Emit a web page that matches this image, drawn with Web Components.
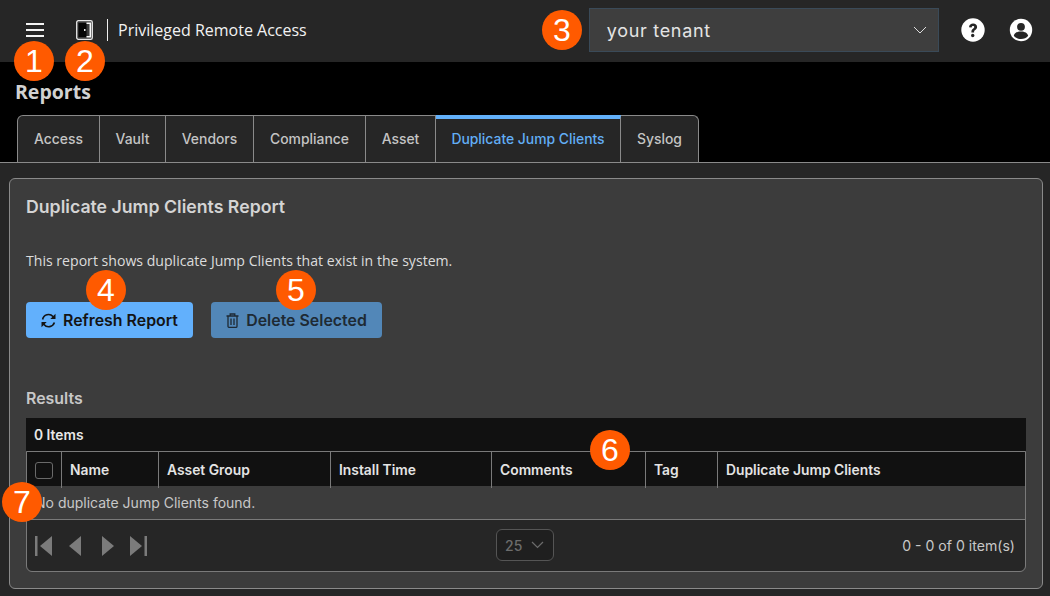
<!DOCTYPE html>
<html lang="en"><head><meta charset="utf-8"><title>Reports</title>
<style>
html,body{margin:0;padding:0;background:#262626;height:596px;overflow:hidden}
body{position:relative;font-family:Inter,"Liberation Sans",sans-serif;color:#ddd}
report-page{display:block}
</style></head><body>
<report-page></report-page>
<script>
function def(name,html){
  customElements.define(name,class extends HTMLElement{
    constructor(){super();this.attachShadow({mode:'open'}).innerHTML=html;}
  });
}
def('note-badge',`<style>
:host{position:absolute;width:40px;height:40px;border-radius:50%;background:#ff5a00;color:#fff;display:flex;align-items:center;justify-content:center;font:32px/40px "Liberation Sans",Arial,sans-serif;z-index:5}
</style><slot></slot>`);

def('app-header',`<style>
:host{display:flex;align-items:center;height:62px;padding-bottom:2px;background:#262626;box-sizing:border-box;color:#fff}
.menu{margin-left:26px;width:18px;height:15px;display:flex;flex-direction:column;justify-content:space-between}
.menu i{display:block;height:2.4px;background:#f4f4f4}
.door{margin-left:32px;display:block}
.sep{width:1px;height:22px;background:#eee;margin:0 10px 0 14px}
.name{font:16px "Open Sans",sans-serif;color:#f2f2f2;white-space:nowrap}
.tenant{margin-left:282px;width:350px;height:44px;box-sizing:border-box;background:#3e3e3e;border:1px solid #3a4a58;display:flex;align-items:center;justify-content:space-between;padding:0 11px 0 17px;font:18px Inter,sans-serif;letter-spacing:.7px;color:#e4e4e4}
.ico{display:block}
.help{margin-left:22px}.user{margin-left:24px}
</style>
<div class="menu"><i></i><i></i><i></i></div>
<svg class="door" width="17" height="20" viewBox="0 0 17 20"><rect x=".7" y=".7" width="15.6" height="18.6" rx="1.6" fill="#3a3a3a" stroke="#e6e6e6" stroke-width="1.300"/><path d="M2.500 3h8v14h-8z" fill="#050505"/><path d="M10.500 3.200h3.800v13.600h-3.800" fill="none" stroke="#f6f6f6" stroke-width="1.500"/><rect x="8" y="9" width="1.500" height="2" fill="#eee"/></svg>
<div class="sep"></div><div class="name">Privileged Remote Access</div>
<div class="tenant"><span>your tenant</span><svg width="14" height="8" viewBox="0 0 14 8"><path d="M1 1l6 6 6-6" fill="none" stroke="#ddd" stroke-width="1"/></svg></div>
<svg class="ico help" width="24" height="24" viewBox="0 0 24 24"><circle cx="12" cy="12" r="11.700" fill="#fff"/><path d="M8 9.200c.2-2.200 1.900-3.600 4.100-3.600 2.400 0 4 1.400 4 3.400 0 1.500-.9 2.400-1.900 3.100-.8.6-1.100 1-1.100 1.900v.4h-2.700v-.7c0-1.500.6-2.300 1.600-3 .9-.6 1.300-1.100 1.300-1.600 0-.7-.5-1.200-1.300-1.200-.9 0-1.300.6-1.400 1.500z" fill="#262626"/><circle cx="11.700" cy="17.500" r="1.700" fill="#262626"/></svg>
<svg class="ico user" width="24" height="24" viewBox="0 0 24 24"><circle cx="12" cy="12" r="11.200" fill="#fff"/><circle cx="12" cy="8.800" r="3.900" fill="#262626"/><path d="M4.800 17.800c.6-2.900 3.400-4.400 7.200-4.400s6.600 1.500 7.200 4.400c-1.700 2.100-4.200 3.200-7.200 3.200s-5.500-1.100-7.200-3.200z" fill="#262626"/></svg>`);

def('page-title',`<style>:host{display:block;height:53px;box-sizing:border-box;padding:16px 0 0 15px;background:#000;color:#d2d2d2;font:700 19.500px/28px "Open Sans",sans-serif}</style><slot></slot>`);

def('tab-bar',`<style>
:host{display:flex;height:48px;box-sizing:border-box;background:#000;padding-left:17px;border-bottom:1px solid #8a8a8a}
::slotted(tab-item:first-child){border-top-left-radius:6px;border-left:1px solid #8a8a8a}
::slotted(tab-item:last-child){border-top-right-radius:6px}
</style><slot></slot>`);
def('tab-item',`<style>
:host{display:flex;align-items:center;justify-content:center;box-sizing:border-box;height:47px;padding-bottom:1px;background:#262626;color:#c4c4c4;font:500 13.900px Inter,sans-serif;border-top:1px solid #8a8a8a;border-right:1px solid #8a8a8a;white-space:nowrap}
:host([active]){color:#62aef5;border-top:4px solid #62b0fa;background:#262626;padding-bottom:4px}
</style><slot></slot>`);

def('report-card',`<style>
:host{display:block;margin:15px 7px 0 9px;height:411px;box-sizing:border-box;background:#3c3c3c;border:1px solid #8a8a8a;border-radius:6px;padding:0 16px}
h2{margin:0;padding-top:18px;height:39px;font:600 17.700px/20px Inter,sans-serif;color:#d4d4d4}
p{margin:0;padding-top:16px;font:14.100px/18px "Open Sans",sans-serif;color:#dcdcdc;height:18px}
.btns{display:flex;gap:18px;margin-top:32px}
h3{margin:0;padding-top:52px;font:600 15.900px/18px Inter,sans-serif;color:#c8c8c8;height:18px}
</style>
<h2>Duplicate Jump Clients Report</h2>
<p>This report shows duplicate Jump Clients that exist in the system.</p>
<div class="btns"><slot name="btn"></slot></div>
<h3>Results</h3>
<slot></slot>`);

def('action-button',`<style>
:host{display:flex;align-items:center;justify-content:center;gap:7px;height:36px;box-sizing:border-box;background:#62b0fc;color:#141414;border-radius:4px;font:600 15.900px Inter,sans-serif;white-space:nowrap}
:host([disabled]){background:#5287b8;color:#1e2a34}
</style><slot name="icon"></slot><slot></slot>`);

def('data-grid',`<style>
:host{display:block;margin-top:10px;color:#eee}
.bar{height:33px;background:#111;font:600 13.800px/34px Inter,sans-serif;padding-left:8px;color:#e8e8e8}
.box{border:1px solid #7a7a7a;border-radius:0 0 6px 6px}
.head{display:grid;grid-template-columns:34px 97px 172px 161px 154px 72px 1fr;height:34px;background:#111;font:600 13.850px/36px Inter,sans-serif;color:#e4e4e4}
.head>div{border-left:1px solid #7a7a7a;padding-left:8px;white-space:nowrap}
.head>div:first-child{border:0;padding:0;display:flex;align-items:center;justify-content:center}
.cb{width:18px;height:17px;box-sizing:border-box;border:1.500px solid #6a6a6a;border-radius:3px}
.empty{height:34px;box-sizing:border-box;border-bottom:1px solid #7a7a7a;padding-left:8px;font:14px/34px Inter,sans-serif;color:#c8c8c8;background:#3c3c3c}
.pager{display:flex;align-items:center;height:51px;background:#262626;border-radius:0 0 6px 6px;position:relative;padding:0 10px 0 8px}
.nav{display:flex;align-items:center}
.size{position:absolute;left:469px;top:9px;width:58px;height:32px;box-sizing:border-box;border:1px solid #555;border-radius:6px;background:#1f1f1f;display:flex;align-items:center;justify-content:space-between;padding:0 9px 0 8px;font:500 14px Inter,sans-serif;color:#6c6c6c}
.count{margin-left:auto;font:14.100px Inter,sans-serif;color:#c8c8c8}
</style>
<div class="bar">0 Items</div>
<div class="box">
<div class="head"><div><span class="cb"></span></div><div>Name</div><div>Asset Group</div><div>Install Time</div><div>Comments</div><div>Tag</div><div>Duplicate Jump Clients</div></div>
<div class="empty">No duplicate Jump Clients found.</div>
<div class="pager"><div class="nav">
<svg width="17" height="20" viewBox="0 0 17 20" fill="#7b7b7b"><rect width="2.500" height="20"/><path d="M17 0v20L5 10z"/></svg>
<svg style="margin-left:17px" width="12" height="20" viewBox="0 0 12 20" fill="#7b7b7b"><path d="M12 0v20L0 10z"/></svg>
<svg style="margin-left:21px" width="12" height="20" viewBox="0 0 12 20" fill="#7b7b7b"><path d="M0 0v20l12-10z"/></svg>
<svg style="margin-left:16px" width="17" height="20" viewBox="0 0 17 20" fill="#7b7b7b"><rect x="14.500" width="2.500" height="20"/><path d="M0 0v20l12-10z"/></svg>
</div>
<div class="size"><span>25</span><svg width="13" height="8" viewBox="0 0 13 8"><path d="M1 1l5.500 5.500L12 1" fill="none" stroke="#6c6c6c" stroke-width="1.200"/></svg></div>
<div class="count">0 - 0 of 0 item(s)</div></div>
</div>`);

def('report-page',`<style>:host{display:block;height:596px}svg{display:block}</style>
<app-header></app-header>
<page-title>Reports</page-title>
<tab-bar>
<tab-item style="width:83px">Access</tab-item><tab-item style="width:66px">Vault</tab-item><tab-item style="width:88px">Vendors</tab-item><tab-item style="width:112px">Compliance</tab-item><tab-item style="width:70px">Asset</tab-item><tab-item active style="width:185px">Duplicate Jump Clients</tab-item><tab-item style="width:78px">Syslog</tab-item>
</tab-bar>
<report-card>
<action-button slot="btn" style="width:167px"><svg slot="icon" width="15" height="15" viewBox="0 0 15 15" fill="none" stroke="#141414" stroke-width="1.600"><path d="M1.600 6.500a6 6 0 0 1 10.400-3l1.500 1.500"/><path d="M13.400 9.500a6 6 0 0 1-10.400 2l-1.500-1.500"/><path d="M14.500 .8v5.200H9.300zM.5 14.200V9h5.200z" fill="#141414" stroke="none"/></svg>Refresh Report</action-button>
<action-button slot="btn" disabled style="width:171px"><svg slot="icon" width="13" height="15" viewBox="0 0 13 15" fill="none" stroke="#1e2a34" stroke-width="1.300"><path d="M.5 3h12M4.200 3V1h4.600v2M2 3v10.200a1.200 1.200 0 0 0 1.200 1.200h6.600a1.200 1.200 0 0 0 1.200-1.200V3M5 5.500v6.500M8 5.500v6.500"/></svg>Delete Selected</action-button>
<data-grid></data-grid>
</report-card>
<note-badge style="left:14px;top:41px">1</note-badge>
<note-badge style="left:65px;top:41px">2</note-badge>
<note-badge style="left:542px;top:10px">3</note-badge>
<note-badge style="left:86px;top:270px">4</note-badge>
<note-badge style="left:276px;top:270px">5</note-badge>
<note-badge style="left:590px;top:430px">6</note-badge>
<note-badge style="left:2px;top:482px">7</note-badge>`);
</script>
</body></html>
